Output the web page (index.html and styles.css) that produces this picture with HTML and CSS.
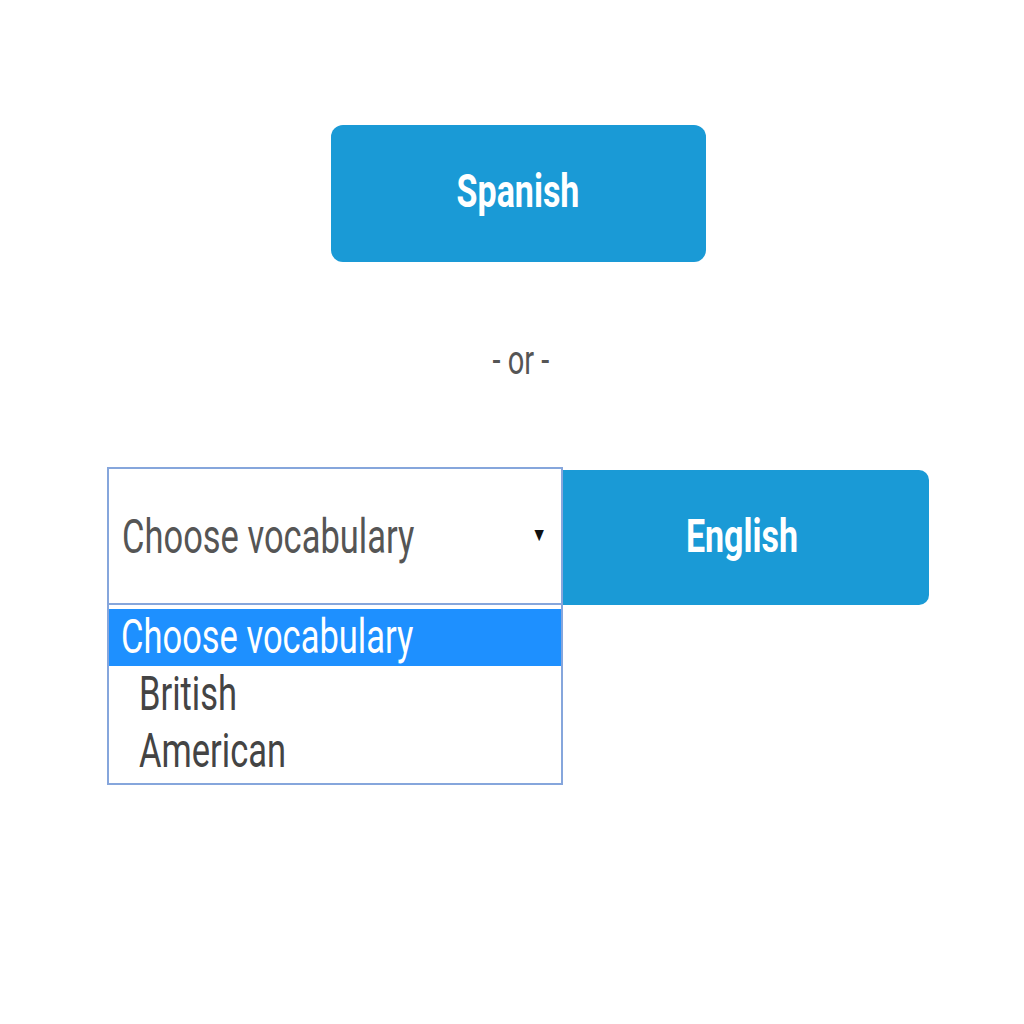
FILE: index.html
```html
<!DOCTYPE html>
<html>
<head>
<meta charset="utf-8">
<link rel="stylesheet" href="styles.css">
</head>
<body>
<div class="page">
  <div class="top">
    <button class="btn btn-spanish"><span class="tx">Spanish</span></button>
  </div>
  <div class="or"><span class="tx">- or -</span></div>
  <div class="row">
    <div class="select-wrap">
      <div class="select">
        <span class="tx">Choose vocabulary</span>
        <span class="arrow">&#9660;</span>
      </div>
      <div class="list">
        <div class="opt opt-active"><span class="tx">Choose vocabulary</span></div>
        <div class="opt"><span class="tx">British</span></div>
        <div class="opt"><span class="tx">American</span></div>
      </div>
    </div>
    <button class="btn btn-english"><span class="tx">English</span></button>
  </div>
</div>
</body>
</html>
```
FILE: styles.css
```css
html, body {
  margin: 0;
  padding: 0;
  background: #ffffff;
}
body {
  font-family: Roboto, "Liberation Sans", sans-serif;
}
.page {
  width: 822px;
  margin-left: 107px;
  padding-top: 125px;
}
.tx {
  display: inline-block;
  transform: scaleY(1.38);
}
.top {
  display: flex;
  justify-content: center;
}
.btn {
  border: none;
  background: #1a9ad6;
  color: #ffffff;
  font-family: Roboto, "Liberation Sans", sans-serif;
  font-weight: 700;
  font-size: 34px;
  padding: 0;
  cursor: pointer;
}
.btn-spanish {
  width: 375px;
  height: 137px;
  border-radius: 12px;
  padding-bottom: 8px;
}
.or {
  text-align: center;
  margin-top: 72px;
  height: 52px;
  line-height: 52px;
  font-size: 29px;
  color: #555555;
  padding-left: 6px;
}
.row {
  display: flex;
  align-items: flex-start;
  margin-top: 81px;
}
.select-wrap {
  width: 456px;
  flex: none;
}
.select {
  box-sizing: border-box;
  height: 138px;
  border: 2px solid #86a6dc;
  display: flex;
  align-items: center;
  justify-content: space-between;
  padding: 0 14px 0 13px;
  font-size: 34.5px;
  color: #555555;
  background: #fff;
}
.arrow {
  font-size: 16px;
  color: #111;
  margin-top: -4px;
  transform: scaleY(1.2);
}
.list {
  box-sizing: border-box;
  border: 2px solid #86a6dc;
  border-top: none;
  height: 180px;
  padding-top: 4px;
}
.opt {
  height: 57px;
  line-height: 57px;
  font-size: 34.5px;
  color: #444444;
  padding-left: 30px;
}
.opt-active {
  background: #1e90ff;
  color: #ffffff;
  padding-left: 12px;
}
.btn-english {
  width: 366px;
  height: 135px;
  margin-top: 3px;
  border-radius: 0 10px 10px 0;
  padding-right: 8px;
  padding-bottom: 6px;
}
```
